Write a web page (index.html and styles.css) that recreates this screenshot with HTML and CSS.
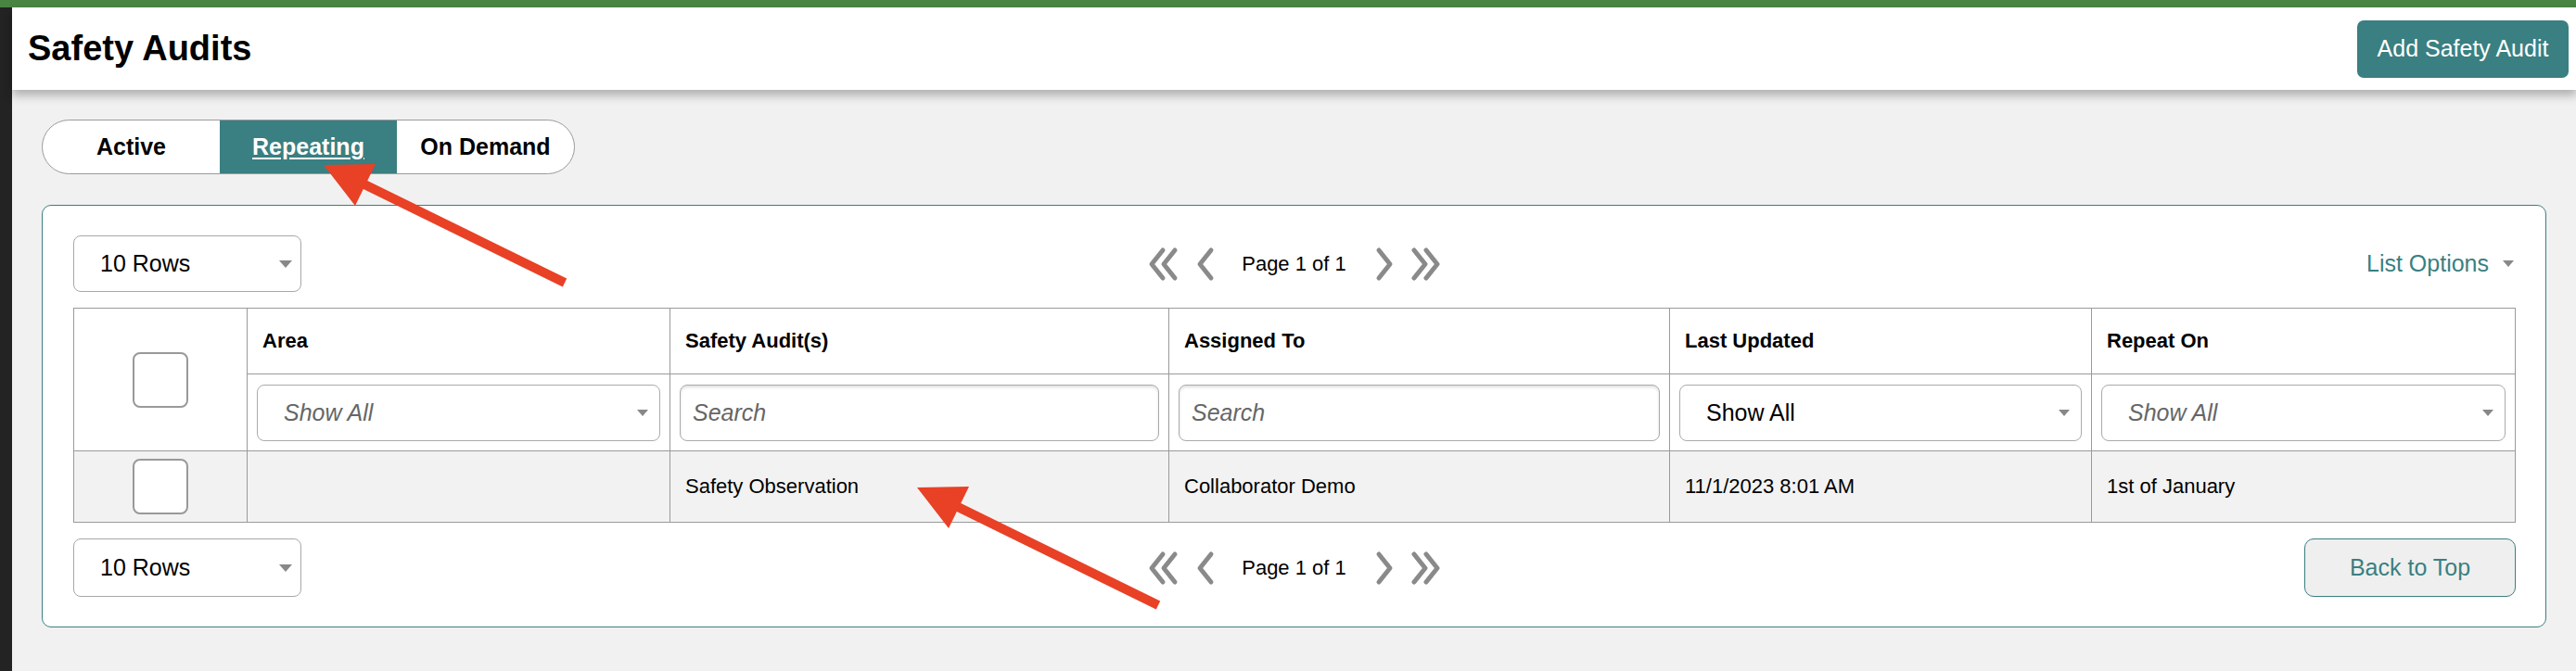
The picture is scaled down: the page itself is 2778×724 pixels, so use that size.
FILE: index.html
```html
<!DOCTYPE html>
<html lang="en">
<head>
    <meta charset="UTF-8">
    <meta name="viewport" content="width=device-width, initial-scale=1.0">
    <title>Safety Audits</title>
    <link rel="stylesheet" href="styles.css">
</head>
<body>
    <!-- Top accent stripe -->
    <div class="top-stripe"></div>

    <div class="layout">
        <!-- Collapsed side rail -->
        <div class="rail"></div>

        <div class="content">
            <!-- Page Header -->
            <header class="page-header">
                <h1>Safety Audits</h1>
                <button class="btn-primary">Add Safety Audit</button>
            </header>

            <main class="page-body">
                <!-- List tabs -->
                <div class="tabs">
                    <a href="#" class="tab">Active</a>
                    <a href="#" class="tab active">Repeating</a>
                    <a href="#" class="tab">On Demand</a>
                </div>

                <section class="card">
                    <div class="toolbar toolbar-top">
                        <div class="rows-select">10 Rows <span class="caret"></span></div>
                        <div class="pager">
                            <svg class="chev chev-double" viewBox="0 0 33 38"><path d="M16 4 L4 19 L16 34 M29 4 L17 19 L29 34"/></svg>
                            <svg class="chev chev-single" viewBox="0 0 21 38"><path d="M17 4 L5 19 L17 34"/></svg>
                            <span class="page-label">Page 1 of 1</span>
                            <svg class="chev chev-single" viewBox="0 0 21 38"><path d="M4 4 L16 19 L4 34"/></svg>
                            <svg class="chev chev-double" viewBox="0 0 33 38"><path d="M4 4 L16 19 L4 34 M17 4 L29 19 L17 34"/></svg>
                        </div>
                        <div class="list-options">List Options <span class="caret caret-sm"></span></div>
                    </div>

                    <table class="audit-table">
                        <colgroup>
                            <col style="width: 187px">
                            <col style="width: 456px">
                            <col style="width: 538px">
                            <col style="width: 540px">
                            <col style="width: 455px">
                            <col style="width: 457px">
                        </colgroup>
                        <thead>
                            <tr class="head-row">
                                <th class="check-cell" rowspan="2"><span class="checkbox"></span></th>
                                <th>Area</th>
                                <th>Safety Audit(s)</th>
                                <th>Assigned To</th>
                                <th>Last Updated</th>
                                <th>Repeat On</th>
                            </tr>
                            <tr class="filter-row">
                                <td><div class="filter-select">Show All <span class="caret caret-sm"></span></div></td>
                                <td><input class="search" type="text" placeholder="Search"></td>
                                <td><input class="search" type="text" placeholder="Search"></td>
                                <td><div class="filter-select chosen">Show All <span class="caret caret-sm"></span></div></td>
                                <td><div class="filter-select">Show All <span class="caret caret-sm"></span></div></td>
                            </tr>
                        </thead>
                        <tbody>
                            <tr class="data-row">
                                <td class="check-cell"><span class="checkbox"></span></td>
                                <td></td>
                                <td>Safety Observation</td>
                                <td>Collaborator Demo</td>
                                <td>11/1/2023 8:01 AM</td>
                                <td>1st of January</td>
                            </tr>
                        </tbody>
                    </table>

                    <div class="toolbar toolbar-bottom">
                        <div class="rows-select">10 Rows <span class="caret"></span></div>
                        <div class="pager">
                            <svg class="chev chev-double" viewBox="0 0 33 38"><path d="M16 4 L4 19 L16 34 M29 4 L17 19 L29 34"/></svg>
                            <svg class="chev chev-single" viewBox="0 0 21 38"><path d="M17 4 L5 19 L17 34"/></svg>
                            <span class="page-label">Page 1 of 1</span>
                            <svg class="chev chev-single" viewBox="0 0 21 38"><path d="M4 4 L16 19 L4 34"/></svg>
                            <svg class="chev chev-double" viewBox="0 0 33 38"><path d="M4 4 L16 19 L4 34 M17 4 L29 19 L17 34"/></svg>
                        </div>
                        <button class="btn-outline">Back to Top</button>
                    </div>
                </section>
            </main>
        </div>
    </div>

    <!-- Red callout arrows drawn on top of the page -->
    <svg class="callouts" viewBox="0 0 2778 724" width="2778" height="724">
        <g class="arrow">
            <line x1="391" y1="198" x2="609" y2="305"/>
            <polygon points="349,178 405,177 383,222"/>
        </g>
        <g class="arrow">
            <line x1="1031" y1="546" x2="1249" y2="653"/>
            <polygon points="989,526 1045,525 1023,570"/>
        </g>
    </svg>
</body>
</html>
```
FILE: styles.css
```css
/* Global Styles */
* {
    box-sizing: border-box;
}

body {
    margin: 0;
    font-family: 'Liberation Sans', Arial, sans-serif;
    background-color: #f1f1f1;
    color: #000000;
}

.top-stripe {
    height: 8px;
    background-color: #4a8442;
}

.layout {
    display: flex;
    min-height: calc(100vh - 8px);
}

.rail {
    width: 13px;
    flex-shrink: 0;
    background-color: #232323;
}

.content {
    flex: 1;
}

/* Page Header */
.page-header {
    display: flex;
    justify-content: space-between;
    align-items: center;
    height: 89px;
    padding: 0 9px 0 17px;
    background-color: #ffffff;
    box-shadow: 0 6px 10px rgba(0, 0, 0, 0.28);
    position: relative;
    z-index: 1;
}

.page-header h1 {
    margin: 0;
    font-size: 38px;
    font-weight: bold;
}

.btn-primary {
    width: 228px;
    height: 62px;
    border: none;
    border-radius: 7px;
    background-color: #3a7f81;
    color: #ffffff;
    font-family: 'Liberation Sans', Arial, sans-serif;
    font-size: 25px;
}

/* Main Section */
.page-body {
    padding: 32px 33px 0 32px;
}

.tabs {
    display: inline-flex;
    margin-bottom: 33px;
    border: 1px solid #9a9a9a;
    border-radius: 30px;
    overflow: hidden;
    background-color: #ffffff;
}

.tab {
    width: 191px;
    height: 57px;
    display: flex;
    align-items: center;
    justify-content: center;
    font-size: 25px;
    font-weight: bold;
    color: #000000;
    text-decoration: none;
}

.tab.active {
    background-color: #3a7f81;
    color: #ffffff;
    text-decoration: underline;
    text-underline-offset: 3px;
}

.card {
    background-color: #ffffff;
    border: 1px solid #3a7f81;
    border-radius: 10px;
    padding: 32px 32px 32px 33px;
}

/* List toolbars */
.toolbar {
    display: grid;
    grid-template-columns: 1fr auto 1fr;
    align-items: center;
}

.toolbar-top {
    margin-bottom: 17px;
}

.toolbar-bottom {
    margin-top: 17px;
}

.rows-select {
    width: 246px;
    height: 61px;
    display: flex;
    align-items: center;
    justify-content: space-between;
    padding: 0 9px 0 28px;
    border: 1px solid #a8a8a8;
    border-radius: 8px;
    font-size: 25px;
    background-color: #ffffff;
}

.toolbar-bottom .rows-select {
    height: 63px;
}

.caret {
    width: 0;
    height: 0;
    border-left: 7px solid transparent;
    border-right: 7px solid transparent;
    border-top: 8px solid #888888;
}

.caret-sm {
    border-left-width: 6px;
    border-right-width: 6px;
    border-top-width: 7px;
}

.pager {
    display: flex;
    align-items: center;
}

.chev {
    height: 38px;
    fill: none;
    stroke: #8a8a8a;
    stroke-width: 5;
    stroke-linecap: round;
    stroke-linejoin: round;
}

.chev-double {
    width: 33px;
}

.chev-single {
    width: 21px;
}

.chev-double + .chev-single {
    margin-left: 18px;
}

.chev-single + .chev-double {
    margin-left: 17px;
}

.page-label {
    margin: 0 31px 0 29px;
    font-size: 22px;
}

.list-options {
    justify-self: end;
    display: flex;
    align-items: center;
    gap: 15px;
    margin-right: 2px;
    color: #3a7f81;
    font-size: 25px;
}

.btn-outline {
    justify-self: end;
    width: 228px;
    height: 63px;
    border: 1px solid #3a7f81;
    border-radius: 10px;
    background-color: #efefef;
    color: #3a7f81;
    font-family: 'Liberation Sans', Arial, sans-serif;
    font-size: 25px;
}

/* Audit Table */
.audit-table {
    width: 100%;
    table-layout: fixed;
    border-collapse: collapse;
    border: 1px solid #9a9a9a;
}

.audit-table th,
.audit-table td {
    border: 1px solid #9a9a9a;
    padding: 0 16px;
    text-align: left;
    vertical-align: middle;
    font-size: 22px;
}

.audit-table th {
    font-weight: bold;
}

.head-row th {
    height: 71px;
}

.filter-row td {
    height: 83px;
    padding: 0 10px;
}

.data-row td {
    height: 77px;
    background-color: #f2f2f2;
}

.audit-table .check-cell {
    padding: 0;
    text-align: center;
}

.checkbox {
    display: inline-block;
    width: 60px;
    height: 60px;
    vertical-align: middle;
    border: 2px solid #999999;
    border-radius: 8px;
    background-color: #ffffff;
}

.filter-select {
    height: 61px;
    display: flex;
    align-items: center;
    justify-content: space-between;
    padding: 0 12px 0 28px;
    border: 1px solid #aaaaaa;
    border-radius: 8px;
    font-size: 25px;
    font-weight: normal;
    font-style: italic;
    color: #666666;
    background-color: #ffffff;
}

.filter-select.chosen {
    font-style: normal;
    color: #000000;
}

.search {
    width: 100%;
    height: 61px;
    padding: 0 13px;
    border: 1px solid #aaaaaa;
    border-radius: 8px;
    box-shadow: inset 0 2px 3px rgba(0, 0, 0, 0.12);
    font-family: 'Liberation Sans', Arial, sans-serif;
    font-size: 25px;
}

.search::placeholder {
    color: #666666;
    font-style: italic;
}

/* Callout arrows */
.callouts {
    position: absolute;
    top: 0;
    left: 0;
    z-index: 2;
    pointer-events: none;
}

.arrow line {
    stroke: #e84126;
    stroke-width: 10;
}

.arrow polygon {
    fill: #e84126;
}
```
